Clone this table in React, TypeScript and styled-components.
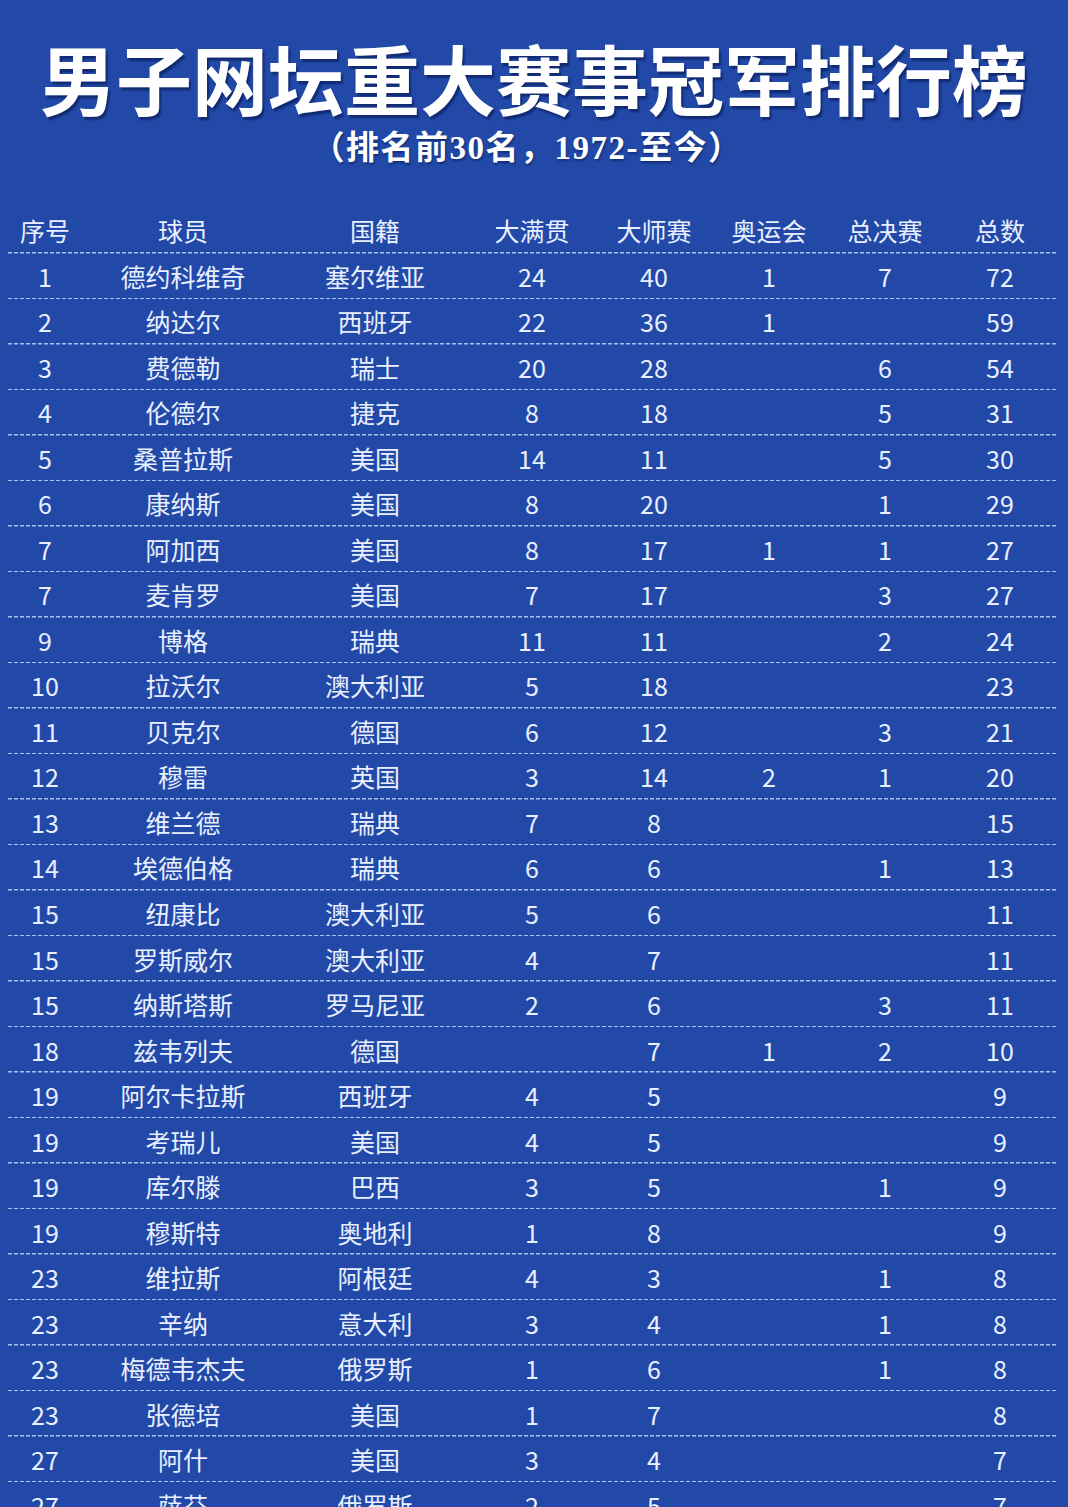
import React from "react";
import styled, { createGlobalStyle } from "styled-components";

const Global = createGlobalStyle`
  html, body { margin: 0; padding: 0; background: #2249a8; }
  body { font-family: "Noto Sans CJK SC", "Noto Sans", sans-serif; }
`;

const Page = styled.div`
  width: 1068px;
  height: 1507px;
  overflow: hidden;
  background: #2249a8;
  color: #e9f0ff;
  display: flex;
  flex-direction: column;
  align-items: center;
`;

const Title = styled.h1`
  margin: 26px 0 0;
  height: 102px;
  line-height: 102px;
  font-family: "Noto Sans CJK SC", sans-serif;
  font-weight: 700;
  font-size: 76px;
  color: #ffffff;
  letter-spacing: 0;
  white-space: nowrap;
  text-shadow: 2px 3px 2px rgba(10, 30, 90, 0.7);
`;

const Subtitle = styled.div`
  height: 40px;
  line-height: 40px;
  margin-right: 14px;
  font-family: "Liberation Serif", "Noto Sans CJK SC", serif;
  font-weight: 700;
  font-size: 33px;
  letter-spacing: 1.5px;
  color: #ffffff;
  white-space: nowrap;
  text-shadow: 1px 2px 2px rgba(10, 30, 90, 0.6);
`;

const Table = styled.div`
  margin-top: 40px;
  width: 1050px;
  align-self: flex-start;
  margin-left: 8px;
  display: flex;
  flex-direction: column;
`;

const Row = styled.div`
  display: grid;
  grid-template-columns: 74px 202px 182px 132px 112px 118px 114px 116px;
  height: 45.52px;
  flex-shrink: 0;
  align-items: center;
  background-image: repeating-linear-gradient(
    to right,
    #a9c4f2 0 4px,
    transparent 4px 6px
  );
  background-size: 100% 1.5px;
  background-position: left bottom;
  background-repeat: no-repeat;
`;

const Cell = styled.div`
  text-align: center;
  font-size: 25px;
  line-height: 1;
  color: #e8efff;
  white-space: nowrap;
`;

const headers = ["序号", "球员", "国籍", "大满贯", "大师赛", "奥运会", "总决赛", "总数"];

const rows: string[][] = [
  ["1", "德约科维奇", "塞尔维亚", "24", "40", "1", "7", "72"],
  ["2", "纳达尔", "西班牙", "22", "36", "1", "", "59"],
  ["3", "费德勒", "瑞士", "20", "28", "", "6", "54"],
  ["4", "伦德尔", "捷克", "8", "18", "", "5", "31"],
  ["5", "桑普拉斯", "美国", "14", "11", "", "5", "30"],
  ["6", "康纳斯", "美国", "8", "20", "", "1", "29"],
  ["7", "阿加西", "美国", "8", "17", "1", "1", "27"],
  ["7", "麦肯罗", "美国", "7", "17", "", "3", "27"],
  ["9", "博格", "瑞典", "11", "11", "", "2", "24"],
  ["10", "拉沃尔", "澳大利亚", "5", "18", "", "", "23"],
  ["11", "贝克尔", "德国", "6", "12", "", "3", "21"],
  ["12", "穆雷", "英国", "3", "14", "2", "1", "20"],
  ["13", "维兰德", "瑞典", "7", "8", "", "", "15"],
  ["14", "埃德伯格", "瑞典", "6", "6", "", "1", "13"],
  ["15", "纽康比", "澳大利亚", "5", "6", "", "", "11"],
  ["15", "罗斯威尔", "澳大利亚", "4", "7", "", "", "11"],
  ["15", "纳斯塔斯", "罗马尼亚", "2", "6", "", "3", "11"],
  ["18", "兹韦列夫", "德国", "", "7", "1", "2", "10"],
  ["19", "阿尔卡拉斯", "西班牙", "4", "5", "", "", "9"],
  ["19", "考瑞儿", "美国", "4", "5", "", "", "9"],
  ["19", "库尔滕", "巴西", "3", "5", "", "1", "9"],
  ["19", "穆斯特", "奥地利", "1", "8", "", "", "9"],
  ["23", "维拉斯", "阿根廷", "4", "3", "", "1", "8"],
  ["23", "辛纳", "意大利", "3", "4", "", "1", "8"],
  ["23", "梅德韦杰夫", "俄罗斯", "1", "6", "", "1", "8"],
  ["23", "张德培", "美国", "1", "7", "", "", "8"],
  ["27", "阿什", "美国", "3", "4", "", "", "7"],
  ["27", "萨芬", "俄罗斯", "2", "5", "", "", "7"],
];

export default function App() {
  return (
    <Page>
      <Global />
      <Title>男子网坛重大赛事冠军排行榜</Title>
      <Subtitle>（排名前30名，1972-至今）</Subtitle>
      <Table>
        <Row>
          {headers.map((h) => (
            <Cell key={h}>{h}</Cell>
          ))}
        </Row>
        {rows.map((r, i) => (
          <Row key={i}>
            {r.map((c, j) => (
              <Cell key={j}>{c}</Cell>
            ))}
          </Row>
        ))}
      </Table>
    </Page>
  );
}
